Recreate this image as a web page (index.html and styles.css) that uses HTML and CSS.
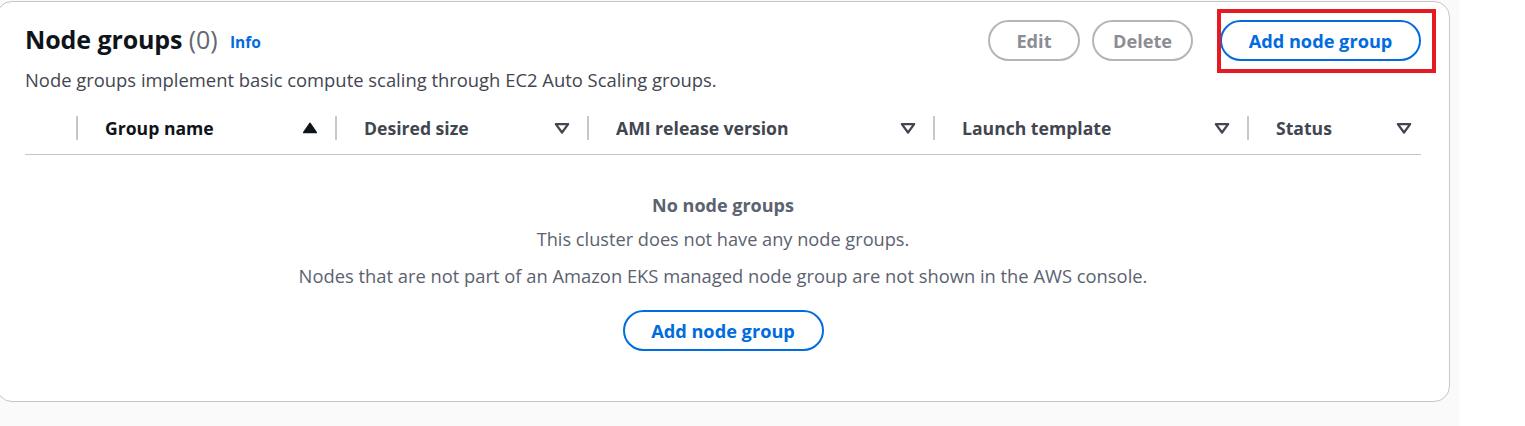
FILE: index.html
```html
<!DOCTYPE html>
<html lang="en">
<head>
<meta charset="utf-8">
<title>Node groups</title>
<link rel="stylesheet" href="styles.css">
</head>
<body>
<div class="page">
  <section class="card">
    <div class="card-header">
      <div class="heading">
        <h2 class="title">Node groups <span class="count">(0)</span> <a class="info" href="#">Info</a></h2>
        <p class="desc">Node groups implement basic compute scaling through EC2 Auto Scaling groups.</p>
      </div>
      <div class="actions">
        <button class="btn btn-disabled btn-edit">Edit</button>
        <button class="btn btn-disabled btn-delete">Delete</button>
        <div class="highlight-wrap">
          <button class="btn btn-primary-outline btn-add">Add node group</button>
          <span class="highlight"></span>
        </div>
      </div>
    </div>

    <div class="table">
      <div class="thead">
        <div class="th th-select"></div>
        <div class="th sorted"><span class="th-label">Group name</span>
          <svg class="sort" viewBox="0 0 16 16"><path d="M2.5 12h11L8 4z" fill="#0f141a" stroke="#0f141a" stroke-width="1.5" stroke-linejoin="round"/></svg>
        </div>
        <div class="th"><span class="th-label">Desired size</span>
          <svg class="sort" viewBox="0 0 16 16"><path d="M2.5 4.5h11L8 12z" fill="none" stroke="#424650" stroke-width="2" stroke-linejoin="round"/></svg>
        </div>
        <div class="th"><span class="th-label">AMI release version</span>
          <svg class="sort" viewBox="0 0 16 16"><path d="M2.5 4.5h11L8 12z" fill="none" stroke="#424650" stroke-width="2" stroke-linejoin="round"/></svg>
        </div>
        <div class="th"><span class="th-label">Launch template</span>
          <svg class="sort" viewBox="0 0 16 16"><path d="M2.5 4.5h11L8 12z" fill="none" stroke="#424650" stroke-width="2" stroke-linejoin="round"/></svg>
        </div>
        <div class="th th-last"><span class="th-label">Status</span>
          <svg class="sort" viewBox="0 0 16 16"><path d="M2.5 4.5h11L8 12z" fill="none" stroke="#424650" stroke-width="2" stroke-linejoin="round"/></svg>
        </div>
      </div>

      <div class="empty">
        <p class="empty-title">No node groups</p>
        <p class="empty-text first">This cluster does not have any node groups.</p>
        <p class="empty-text second">Nodes that are not part of an Amazon EKS managed node group are not shown in the AWS console.</p>
        <button class="btn btn-primary-outline btn-empty">Add node group</button>
      </div>
    </div>
  </section>
</div>
</body>
</html>
```

FILE: styles.css
```css
* { box-sizing: border-box; }

html, body {
  margin: 0;
  padding: 0;
  background: #ffffff;
  font-family: "Open Sans", "Noto Sans", "Liberation Sans", sans-serif;
  color: #0f141a;
}

.page {
  width: 1459px;
  height: 426px;
  background: #fafafa;
  padding-top: 1px;
}

.card {
  margin-left: -4px;
  width: 1454px;
  height: 401px;
  background: #ffffff;
  border: 1px solid #c6c6cd;
  border-radius: 16px;
  padding: 16px 28px 0 28px;
}

.card-header {
  display: flex;
  justify-content: space-between;
  align-items: flex-start;
}

.title {
  margin: 0;
  font-size: 25px;
  line-height: 42px;
  font-weight: 700;
  color: #0f141a;
  letter-spacing: -0.1px;
}

.count {
  font-weight: 400;
  color: #656871;
}

.info {
  font-size: 15.5px;
  font-weight: 700;
  color: #006ce0;
  text-decoration: none;
  margin-left: 6px;
  vertical-align: 1px;
  letter-spacing: 0;
}

.desc {
  margin: 5px 0 0 0;
  font-size: 18.4px;
  line-height: 24px;
  color: #424650;
}

.actions {
  display: flex;
  gap: 12px;
  align-items: center;
  padding-top: 2px;
}

.btn {
  font-family: inherit;
  font-size: 18.2px;
  font-weight: 700;
  height: 41px;
  border-radius: 21px;
  background: #ffffff;
  padding: 0;
  cursor: pointer;
}

.btn-disabled {
  border: 2px solid #b4b4bb;
  color: #8c8c94;
}

.btn-edit { width: 92px; }
.btn-delete { width: 101px; }

.btn-primary-outline {
  border: 2px solid #006ce0;
  color: #006ce0;
}

.btn-add { width: 201px; }

.highlight-wrap {
  position: relative;
  margin-left: 15px;
}

.highlight {
  position: absolute;
  left: -3px;
  top: -11px;
  width: 219px;
  height: 64px;
  border: 4px solid #e51b24;
  pointer-events: none;
}

.table {
  margin-top: 12px;
}

.thead {
  display: grid;
  grid-template-columns: 51px 259px 252px 346px 314px 175px;
  border-bottom: 1px solid #c6c6cd;
  height: 51px;
  padding-bottom: 2px;
  align-items: center;
}

.th {
  display: flex;
  align-items: center;
  justify-content: space-between;
  height: 24px;
  border-left: 2px solid #c6c6cd;
  padding: 0 16px 0 27px;
  font-size: 17.6px;
  font-weight: 700;
  color: #424650;
}

.th-select { border-left: none; }
.th-last { padding-right: 9px; }

.sorted .th-label { color: #0f141a; }

.sort {
  width: 18px;
  height: 18px;
  flex: none;
}

.empty {
  display: flex;
  flex-direction: column;
  align-items: center;
  padding-top: 38px;
  color: #5b6270;
}

.empty p { margin: 0; font-size: 18.2px; line-height: 24px; }

.empty-title {
  font-weight: 700;
  color: #5b6270;
  font-size: 18px !important;
}

.empty .first { margin-top: 10px; }
.empty .second { margin-top: 13px; font-size: 18.35px; }

.btn-empty {
  margin-top: 22px;
  width: 201px;
}
```
